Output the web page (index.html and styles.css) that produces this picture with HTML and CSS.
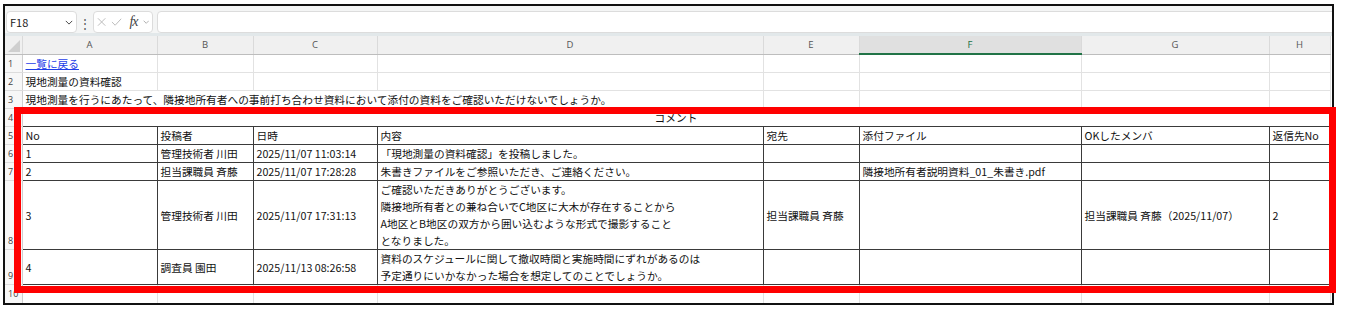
FILE: index.html
```html
<!DOCTYPE html>
<html lang="ja">
<head>
  <meta charset="UTF-8" />
  <meta name="viewport" content="width=device-width, initial-scale=1" />
  <title>現地測量の資料確認</title>
  <link rel="stylesheet" href="styles.css">
</head>
<body>
  <div class="window">
    <div class="formula-bar">
      <div class="name-box">
        <span>F18</span>
        <svg class="chev" viewBox="0 0 10 6"><path d="M1 1l4 4 4-4" fill="none" stroke="#444" stroke-width="1.2"/></svg>
      </div>
      <span class="dots">⋮</span>
      <div class="fx-box">
        <svg class="ico" viewBox="0 0 10 10"><path d="M1 1l8 8M9 1l-8 8" fill="none" stroke="#b8b8b8" stroke-width="1"/></svg>
        <svg class="ico check" viewBox="0 0 12 10"><path d="M1 5l3.5 3.5L11 1.5" fill="none" stroke="#b8b8b8" stroke-width="1"/></svg>
        <span class="fx">fx</span>
        <svg class="chev small" viewBox="0 0 10 6"><path d="M1 1l4 4 4-4" fill="none" stroke="#888" stroke-width="1"/></svg>
      </div>
      <div class="formula-input"></div>
    </div>

    <table class="sheet">
      <colgroup>
        <col style="width:17px"><col style="width:135px"><col style="width:96px"><col style="width:124px">
        <col style="width:386px"><col style="width:96px"><col style="width:222px"><col style="width:188px"><col style="width:61px">
      </colgroup>
      <tr class="col-head">
        <th class="corner"><span class="tri"></span></th>
        <th>A</th><th>B</th><th>C</th><th>D</th><th>E</th><th class="sel">F</th><th>G</th><th>H</th>
      </tr>
      <tr class="r18">
        <td class="rn">1</td>
        <td><a href="#" class="link">一覧に戻る</a></td><td></td><td></td><td></td><td></td><td></td><td></td><td></td>
      </tr>
      <tr class="r18">
        <td class="rn">2</td>
        <td>現地測量の資料確認</td><td></td><td></td><td></td><td></td><td></td><td></td><td></td>
      </tr>
      <tr class="r18">
        <td class="rn">3</td>
        <td colspan="4" class="long">現地測量を行うにあたって、隣接地所有者への事前打ち合わせ資料において添付の資料をご確認いただけないでしょうか。</td>
        <td></td><td></td><td></td><td></td>
      </tr>
      <tr class="r18">
        <td class="rn">4</td>
        <td colspan="8" class="title">コメント</td>
      </tr>
      <tr class="r18 box">
        <td class="rn">5</td>
        <td>No</td><td>投稿者</td><td>日時</td><td>内容</td><td>宛先</td><td>添付ファイル</td><td>OKしたメンバ</td><td>返信先No</td>
      </tr>
      <tr class="r18 box">
        <td class="rn">6</td>
        <td>1</td><td>管理技術者 川田</td><td>2025/11/07 11:03:14</td><td>「現地測量の資料確認」を投稿しました。</td><td></td><td></td><td></td><td></td>
      </tr>
      <tr class="r18 box">
        <td class="rn">7</td>
        <td>2</td><td>担当課職員 斉藤</td><td>2025/11/07 17:28:28</td><td>朱書きファイルをご参照いただき、ご連絡ください。</td><td></td><td>隣接地所有者説明資料_01_朱書き.pdf</td><td></td><td></td>
      </tr>
      <tr class="r69 box">
        <td class="rn">8</td>
        <td>3</td><td>管理技術者 川田</td><td>2025/11/07 17:31:13</td>
        <td class="multi">ご確認いただきありがとうございます。<br>隣接地所有者との兼ね合いでC地区に大木が存在することから<br>A地区とB地区の双方から囲い込むような形式で撮影すること<br>となりました。</td>
        <td>担当課職員 斉藤</td><td></td><td>担当課職員 斉藤（2025/11/07）</td><td>2</td>
      </tr>
      <tr class="r34 box">
        <td class="rn">9</td>
        <td>4</td><td>調査員 園田</td><td>2025/11/13 08:26:58</td>
        <td class="multi">資料のスケジュールに関して撤収時間と実施時間にずれがあるのは<br>予定通りにいかなかった場合を想定してのことでしょうか。</td>
        <td></td><td></td><td></td><td></td>
      </tr>
      <tr class="r20">
        <td class="rn top">10</td>
        <td></td><td></td><td></td><td></td><td></td><td></td><td></td><td></td>
      </tr>
    </table>
  </div>

  <div class="highlight"></div>
</body>
</html>
```

FILE: styles.css
```css
body {
  margin: 0;
  background: #fff;
  font-family: "Noto Sans CJK JP", "Noto Sans", sans-serif;
  font-size: 10.7px;
  color: #111;
}

.window {
  margin: 4px 0 0 3px;
  width: 1327px;
  height: 297px;
  border: 2px solid #111;
  overflow: hidden;
  background: #fff;
}

/* formula bar */
.formula-bar {
  display: flex;
  align-items: center;
  height: 27px;
  padding: 0 0 0 1px;
  background: #f4f5f5;
  border-bottom: 3px solid #e2e8ea;
  box-sizing: content-box;
}

.name-box,
.fx-box,
.formula-input {
  display: flex;
  align-items: center;
  height: 22px;
  margin-top: 5px;
  box-sizing: border-box;
  background: #fff;
  border: 1px solid #dcdcdc;
  border-radius: 4px;
}

.name-box {
  width: 71px;
  padding: 0 3px 0 3px;
  justify-content: space-between;
  font-size: 11px;
  color: #222;
}

.chev {
  width: 8px;
  height: 5px;
}

.chev.small {
  width: 7px;
  height: 4px;
}

.dots {
  width: 16px;
  text-align: center;
  margin-top: 5px;
  color: #555;
  font-size: 12px;
}

.fx-box {
  width: 60px;
  padding: 0 3px;
  gap: 5px;
}

.ico {
  width: 10px;
  height: 10px;
}

.ico.check {
  width: 12px;
}

.fx {
  font-family: "Liberation Serif", serif;
  font-style: italic;
  font-size: 14px;
  color: #444;
  margin-left: 2px;
  letter-spacing: -1px;
}

.formula-input {
  flex: 1;
  margin-left: 4px;
  margin-right: -4px;
}

/* grid */
.sheet {
  table-layout: fixed;
  border-collapse: collapse;
  width: 1325px;
}

.sheet td,
.sheet th {
  padding: 0 3px;
  border-right: 1px solid #e2e2e2;
  border-bottom: 1px solid #e2e2e2;
  white-space: nowrap;
  overflow: visible;
  vertical-align: middle;
  line-height: 17px;
}

.col-head th {
  height: 17px;
  background: #f0f0f0;
  border-right: 1px solid #dadada;
  border-bottom: 1px solid #bdbdbd;
  font-weight: normal;
  font-family: "Open Sans", "Noto Sans", sans-serif;
  font-size: 9.5px;
  color: #555;
  text-align: center;
}

.col-head th.sel {
  background: #e0e0e0;
  border-bottom: 2px solid #217346;
  color: #217346;
}

.col-head .corner {
  position: relative;
  padding: 0;
}

.tri {
  position: absolute;
  right: 2px;
  bottom: 2px;
  width: 0;
  height: 0;
  border-left: 12px solid transparent;
  border-bottom: 12px solid #cfcfcf;
}

.sheet td.rn {
  padding: 0 0 0 3px;
  background: #f7f7f7;
  border-right: 1px solid #cfcfcf;
  border-bottom: 1px solid #dcdcdc;
  font-family: "Open Sans", "Noto Sans", sans-serif;
  font-size: 9px;
  color: #444;
  vertical-align: bottom;
}

.sheet td.rn.top {
  vertical-align: top;
}

.r18 td { height: 17px; }
.r69 td { height: 68px; }
.r34 td { height: 33px; }
.r20 td { height: 19px; }

.link {
  color: #1f3ee8;
  text-decoration: underline;
}

.title {
  text-align: center;
  border-bottom-color: #3a3a3a !important;
}

.sheet .box td:not(.rn) {
  border: 1px solid #3a3a3a;
}

.multi {
  line-height: 17px;
}

/* red annotation frame laid over the sheet */
.highlight {
  position: absolute;
  left: 14px;
  top: 107px;
  width: 1308px;
  height: 172px;
  border: 7px solid #ff0000;
}
```
